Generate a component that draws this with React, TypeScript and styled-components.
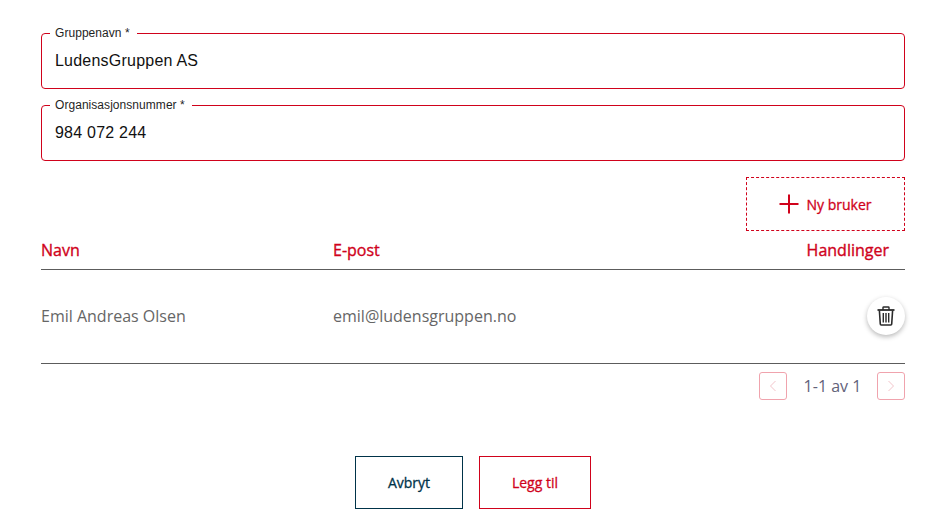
import React from "react";
import styled, { createGlobalStyle } from "styled-components";

const Global = createGlobalStyle`
  html, body { margin: 0; padding: 0; background: #fff; }
  body { font-family: "Open Sans", sans-serif; }
  * { box-sizing: border-box; }
`;

const Page = styled.div`
  width: 946px;
  height: 531px;
  padding: 33px 41px 0;
  display: flex;
  flex-direction: column;
  overflow: hidden;
`;

const Field = styled.div`
  margin: 0 0 16px;
  padding: 0 13px;
  height: 56px;
  border: 1px solid #d0021b;
  border-radius: 4px;
  position: relative;
  display: flex;
  align-items: center;
`;

const FieldLabel = styled.span`
  position: absolute;
  top: -8px;
  left: 8px;
  padding: 0 7px 0 5px;
  background: #fff;
  font: 12px/14px "Liberation Sans", Arial, sans-serif;
  letter-spacing: 0.05px;
  color: #1f1f1f;
`;

const FieldValue = styled.span`
  font: 16px/20px "Liberation Sans", Arial, sans-serif;
  letter-spacing: 0.22px;
  color: #111;
`;

const Toolbar = styled.div`
  display: flex;
  justify-content: flex-end;
`;

const AddButton = styled.button`
  width: 159px;
  height: 54px;
  border: 1px dashed #d0021b;
  background: #fff;
  color: #d0021b;
  font: 400 14px "Open Sans", sans-serif;
  -webkit-text-stroke: 0.3px #d0021b;
  display: flex;
  align-items: center;
  justify-content: center;
  gap: 7px;
  padding: 1px 0 0;
`;

const PlusWrap = styled.span`
  display: flex;
  margin-top: -1px;
`;

const TableRow = styled.div<{ $head?: boolean }>`
  display: grid;
  grid-template-columns: 292px 1fr auto;
  align-items: center;
  border-bottom: 1px solid #5c5c5c;
  height: ${(p) => (p.$head ? "39px" : "94px")};
  ${(p) =>
    p.$head
      ? `color: #d0021b; font-weight: 400; font-size: 16px; -webkit-text-stroke: 0.35px #d0021b; padding-bottom: 1px;`
      : `color: #666; font-size: 16px; padding-bottom: 1px;`}
`;

const ActionHead = styled.span`
  padding-right: 16px;
`;

const IconButton = styled.button`
  width: 38px;
  height: 38px;
  border-radius: 50%;
  border: 0;
  background: #fff;
  box-shadow: 0 2px 5px rgba(0, 0, 0, 0.28);
  display: flex;
  align-items: center;
  justify-content: center;
  padding: 0;
  color: #333;
`;

const Pager = styled.div`
  margin-top: 8px;
  display: flex;
  justify-content: flex-end;
  align-items: center;
  height: 28px;
`;

const PageButton = styled.button`
  width: 28px;
  height: 28px;
  border: 1px solid #f0a3ad;
  border-radius: 3px;
  background: #fff;
  padding: 0;
  display: flex;
  align-items: center;
  justify-content: center;
  color: #f3c4ca;
`;

const PageText = styled.span`
  width: 90px;
  padding-left: 1px;
  text-align: center;
  font: 16px "Open Sans", sans-serif;
  color: #62627a;
`;

const Actions = styled.div`
  margin-top: 56px;
  display: flex;
  justify-content: center;
  gap: 16px;
`;

const ActionButton = styled.button<{ $primary?: boolean; $w: number }>`
  width: ${(p) => p.$w}px;
  height: 53px;
  background: #fff;
  border: 1px solid ${(p) => (p.$primary ? "#d0021b" : "#003349")};
  color: ${(p) => (p.$primary ? "#d0021b" : "#003349")};
  -webkit-text-stroke: 0.3px ${(p) => (p.$primary ? "#d0021b" : "#003349")};
  font: 400 14px "Open Sans", sans-serif;
  padding: 0;
`;

const Plus = () => (
  <svg width="20" height="20" viewBox="0 0 20 20" fill="none" stroke="currentColor" strokeWidth="2">
    <path d="M10 0.5V19.5M0.5 10H19.5" />
  </svg>
);

const Trash = () => (
  <svg width="18" height="20" viewBox="0 0 18 20" fill="none" stroke="#2b2b2b" strokeWidth="1.4">
    <path d="M0.5 4H17.5" strokeWidth="1.8" />
    <path d="M6 4V1.6C6 1.2 6.3 1 6.7 1H11.3C11.7 1 12 1.2 12 1.6V4" />
    <path d="M2.4 4.5L3.3 18C3.3 18.6 3.8 19 4.3 19H13.7C14.2 19 14.7 18.6 14.7 18L15.6 4.5" strokeWidth="1.6" />
    <path d="M6.3 7V16.5M9 7V16.5M11.7 7V16.5" />
  </svg>
);

const Chevron = ({ dir }: { dir: "left" | "right" }) => (
  <svg width="8" height="12" viewBox="0 0 8 12" fill="none" stroke="currentColor" strokeWidth="1">
    <path d={dir === "left" ? "M6.5 1L1.5 6L6.5 11" : "M1.5 1L6.5 6L1.5 11"} />
  </svg>
);

export default function App() {
  return (
    <Page>
      <Global />
      <Field>
        <FieldLabel>Gruppenavn *</FieldLabel>
        <FieldValue>LudensGruppen AS</FieldValue>
      </Field>
      <Field>
        <FieldLabel>Organisasjonsnummer *</FieldLabel>
        <FieldValue>984 072 244</FieldValue>
      </Field>
      <Toolbar>
        <AddButton>
          <PlusWrap>
            <Plus />
          </PlusWrap>
          Ny bruker
        </AddButton>
      </Toolbar>
      <TableRow $head>
        <span>Navn</span>
        <span>E-post</span>
        <ActionHead>Handlinger</ActionHead>
      </TableRow>
      <TableRow>
        <span>Emil Andreas Olsen</span>
        <span>emil@ludensgruppen.no</span>
        <IconButton aria-label="Slett">
          <Trash />
        </IconButton>
      </TableRow>
      <Pager>
        <PageButton aria-label="Forrige">
          <Chevron dir="left" />
        </PageButton>
        <PageText>1-1 av 1</PageText>
        <PageButton aria-label="Neste">
          <Chevron dir="right" />
        </PageButton>
      </Pager>
      <Actions>
        <ActionButton $w={108}>Avbryt</ActionButton>
        <ActionButton $w={112} $primary>
          Legg til
        </ActionButton>
      </Actions>
    </Page>
  );
}
